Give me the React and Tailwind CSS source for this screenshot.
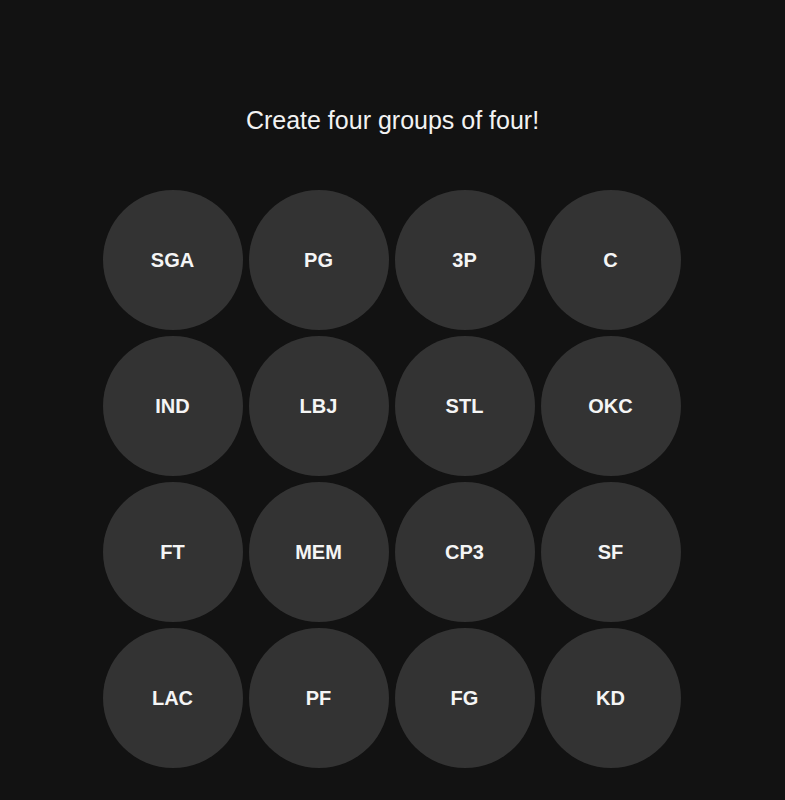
const tiles = [
  'SGA', 'PG', '3P', 'C',
  'IND', 'LBJ', 'STL', 'OKC',
  'FT', 'MEM', 'CP3', 'SF',
  'LAC', 'PF', 'FG', 'KD',
];

export default function App() {
  return (
    <div className="min-h-[800px] w-full bg-[#121212] font-['Liberation_Sans',Arial,sans-serif] text-[#f2f2f2]">
      <div className="flex flex-col items-center pt-[105px]">
        <h1 className="text-[25px] leading-[30px] font-normal">Create four groups of four!</h1>
        <div className="mt-[55px] mr-[2px] grid grid-cols-4 gap-[6px]">
          {tiles.map((t) => (
            <button
              key={t}
              className="flex h-[140px] w-[140px] items-center justify-center rounded-full bg-[#333333] text-[20px] font-bold text-[#f5f5f5]"
            >
              {t}
            </button>
          ))}
        </div>
      </div>
    </div>
  );
}
